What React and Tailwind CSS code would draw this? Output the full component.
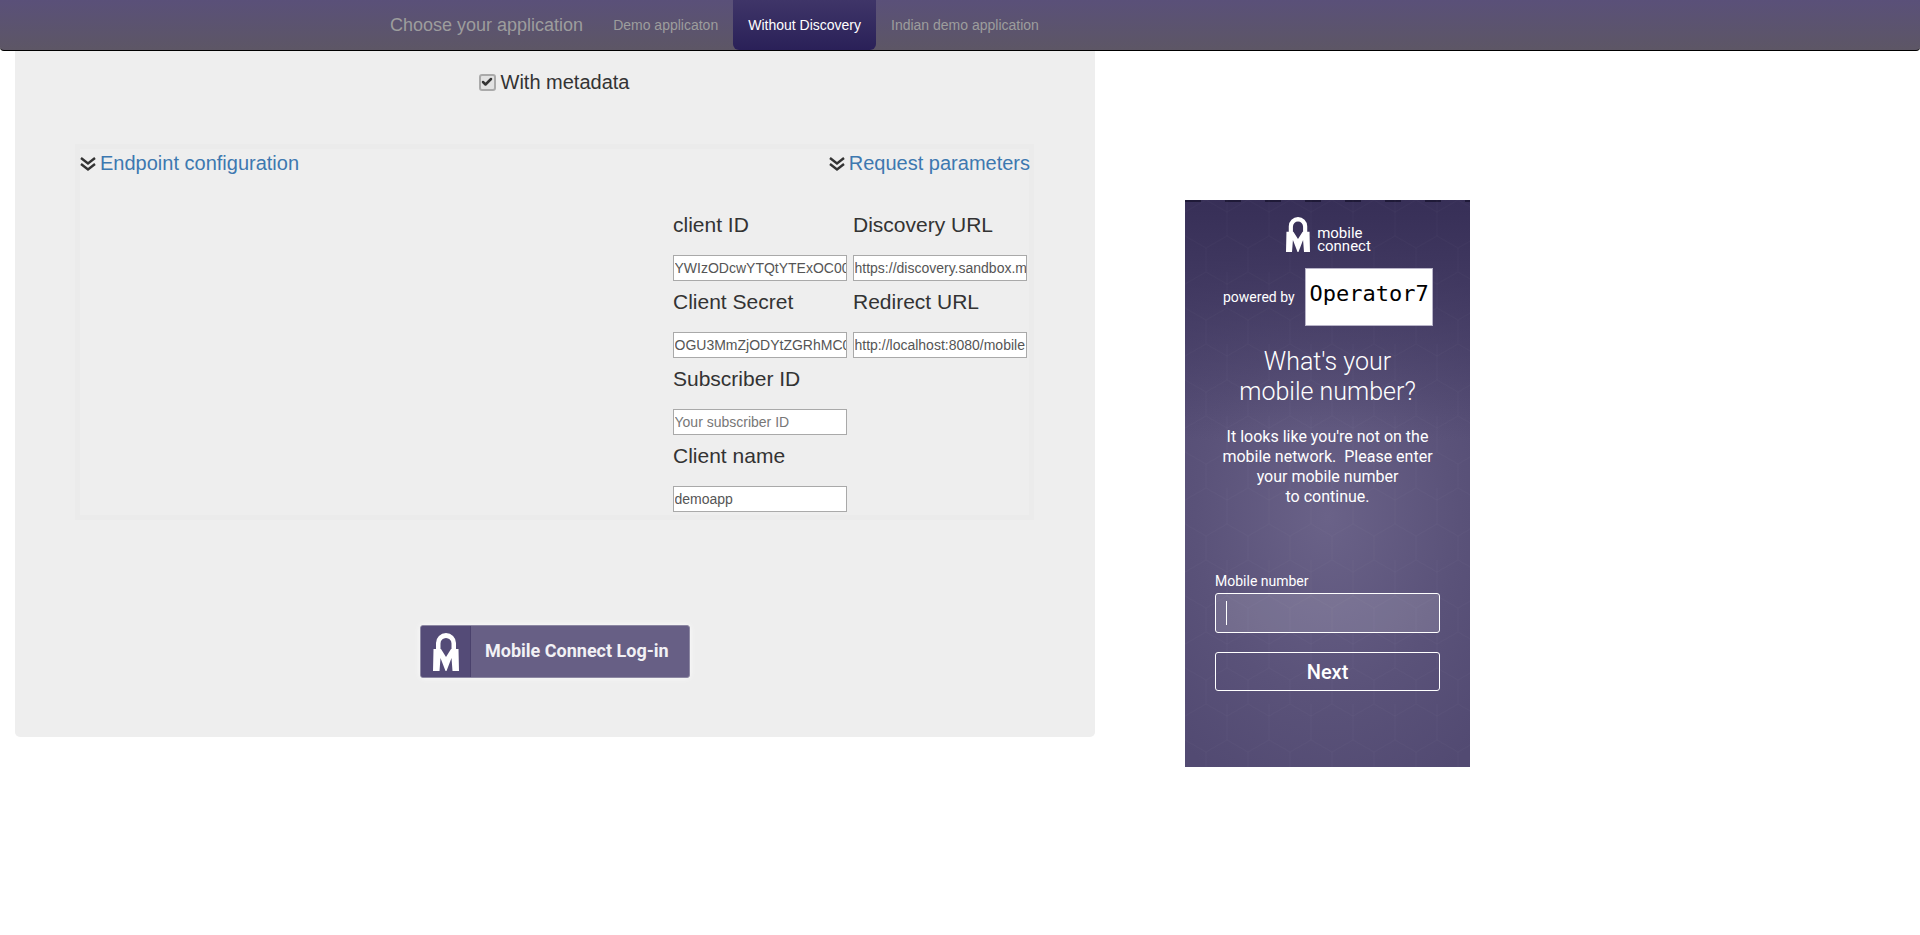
import React from 'react';
import { Check } from 'lucide-react';

const fields = [
    { label: 'client ID', value: 'YWIzODcwYTQtYTExOC00NzQ5LWJi' },
    { label: 'Discovery URL', value: 'https://discovery.sandbox.mobileconnect.io/v2/discovery' },
    { label: 'Client Secret', value: 'OGU3MmZjODYtZGRhMC00ZTk5LWE1' },
    { label: 'Redirect URL', value: 'http://localhost:8080/mobile' },
    { label: 'Subscriber ID', placeholder: 'Your subscriber ID' },
    null,
    { label: 'Client name', value: 'demoapp' },
    null,
];

const LockLogo = ({ className }) => (
    <svg viewBox="0 0 26 38" className={className} fill="currentColor">
        <path d="M3 17V10a10 10 0 0 1 20 0V17H18.5V10.5a5.5 5.5 0 0 0-11 0V17z" />
        <path d="M0.5 16H8L13 24L18 16H25.5L26 38H19.5L18.5 25L13.5 38H12.5L7.5 25L6.5 38H0z" />
    </svg>
);

const DoubleChevron = () => (
    <svg viewBox="0 0 18 18" className="w-[18px] h-[18px] mt-[6px] mr-[3px] -ml-[1px]" fill="none" stroke="#333" strokeWidth="2.4">
        <polyline points="2,3 9,8.5 16,3" />
        <polyline points="2,9 9,14.5 16,9" />
    </svg>
);

const Field = ({ field }) => (
    <div>
        <div className="h-[51px] pt-[6px] text-[21px] leading-[30px] text-[#333]">{field.label}</div>
        <input
            readOnly
            value={field.value}
            placeholder={field.placeholder}
            className="block w-[174px] h-[26px] px-[0.5px] bg-white border border-[#a9a9a9] text-[14px] text-[#555] placeholder:text-[#777] outline-none"
        />
    </div>
);

const SectionLink = ({ children }) => (
    <a className="flex items-start text-[20px] leading-[28px] text-[#3d78b0]">
        <DoubleChevron />
        {children}
    </a>
);

export default function App() {
    return (
        <div className="min-h-[935px] bg-white font-['Liberation_Sans',Arial,sans-serif]">
            {/* Navbar */}
            <nav className="h-[51px] flex pl-[390px] border-b border-black rounded-b-[4px] bg-gradient-to-b from-[#5a5079] to-[#5d5665] text-[#9d9d9d]">
                <div className="text-[18px] leading-[50px] mr-[15px]">Choose your application</div>
                <a className="px-[15px] text-[14px] leading-[50px]">Demo applicaton</a>
                <a className="px-[15px] text-[14px] leading-[50px] text-white rounded-b-[6px] h-[50px] bg-gradient-to-b from-[#3f3568] to-[#2a2058]">Without Discovery</a>
                <a className="px-[15px] text-[14px] leading-[50px]">Indian demo application</a>
            </nav>

            <div className="flex items-start">
                {/* Left panel */}
                <div className="ml-[15px] w-[1080px] h-[686px] bg-[#eeeeee] rounded-b-[5px] pt-[17px] pl-[60px]">
                    <label className="flex items-center justify-center w-[958px] h-[28px] text-[20px] text-[#333]">
                        <span className="flex items-center justify-center w-[17px] h-[17px] mr-[5px] rounded-[3px] border-2 border-[#aaa] bg-[#e2e2e2]">
                            <Check className="w-[12px] h-[12px] text-[#333]" strokeWidth={5} />
                        </span>
                        With metadata
                    </label>

                    <div className="mt-[48px] w-[959px] h-[376px] border-[5px] border-[#ebebeb]">
                        <div className="flex justify-between h-[55px] -mr-[1px]">
                            <SectionLink>Endpoint configuration</SectionLink>
                            <SectionLink>Request parameters</SectionLink>
                        </div>
                        <div className="grid grid-cols-[174px_174px] gap-x-[6px] pl-[593px]">
                            {fields.map((field, i) => (field ? <Field key={i} field={field} /> : <div key={i} />))}
                        </div>
                    </div>

                    {/* Login button */}
                    <div className="flex mt-[105px] ml-[345px] w-[270px] h-[53px] rounded-[3px] overflow-hidden bg-[#675f85] border border-[#8d88a3] shadow-[0_0_6px_rgba(255,255,255,0.8)] text-white font-['Roboto',sans-serif]">
                        <div className="flex items-center justify-center w-[50px] bg-[#544b77] border-r border-[#4a416c]">
                            <LockLogo className="w-[26px] h-[38px]" />
                        </div>
                        <div className="flex-1 pl-[14px] text-[18px] font-bold leading-[50px] text-[#f2f1f5]">Mobile Connect Log-in</div>
                    </div>
                </div>

                {/* Mobile connect page */}
                <div className="relative ml-[90px] mt-[149px] w-[285px] h-[567px] font-['Roboto',sans-serif] text-white bg-[radial-gradient(ellipse_220px_300px_at_50%_56%,#6a6288_0%,#5a5279_60%,#524a72_100%)]">
                    <div className="absolute inset-x-0 top-0 h-[240px] bg-gradient-to-b from-[#372f57] to-transparent"></div>
                    <div className="absolute inset-x-0 top-0 h-[2px] bg-[repeating-linear-gradient(90deg,#1f1a38_0px,#1f1a38_16px,transparent_16px,transparent_40px)]"></div>
                    <svg className="absolute inset-0 w-full h-full" aria-hidden="true">
                        <defs>
                            <pattern id="hex" width="42" height="72" patternUnits="userSpaceOnUse">
                                <path d="M21 0L42 12V36L21 48L0 36V12ZM21 48V72M0 0V12M42 0V12" fill="none" stroke="#fff" strokeOpacity="0.02" />
                            </pattern>
                        </defs>
                        <rect width="100%" height="100%" fill="url(#hex)" />
                    </svg>
                    <div className="relative">
                        <div className="flex justify-center items-center h-[68px] pl-[2px]">
                            <LockLogo className="w-[24px] h-[37px]" />
                            <div className="ml-[7px] text-[15px] leading-[13px] mt-[12px]">mobile<br />connect</div>
                        </div>
                        <div className="flex items-center pl-[38px]">
                            <span className="text-[14px] mr-[10px]">powered by</span>
                            <div className="w-[128px] h-[58px] bg-white border border-[#b8b4c8] pl-[4px] text-black font-['DejaVu_Sans_Mono',monospace] text-[22px] leading-[50px]">Operator7</div>
                        </div>
                        <h1 className="mt-[21px] text-center text-[25px] font-light leading-[30px]">What's your<br />mobile number?</h1>
                        <p className="mt-[20px] text-center text-[16px] leading-[20px]">It looks like you're not on the<br />mobile network.&nbsp; Please enter<br />your mobile number<br />to continue.</p>
                        <div className="px-[30px] mt-[66px]">
                            <label className="block text-[14px] leading-[17px] mb-[3px]">Mobile number</label>
                            <div className="flex items-center h-[40px] px-[10px] rounded-[3px] border border-white bg-white/15">
                                <span className="w-[1px] h-[24px] bg-white"></span>
                            </div>
                            <button className="block w-full h-[39px] mt-[19px] rounded-[3px] border border-white text-[20px] font-medium text-center">Next</button>
                        </div>
                    </div>
                </div>
            </div>
        </div>
    );
}
